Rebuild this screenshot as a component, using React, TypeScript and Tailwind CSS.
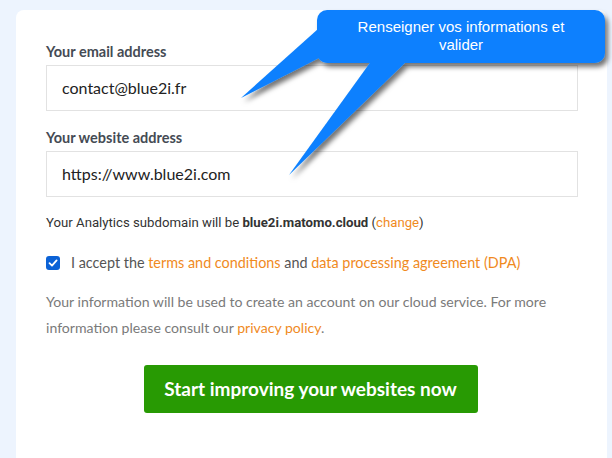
import React from "react";

const sans = "font-['Lato','Open_Sans',sans-serif]";

function Callout() {
  return (
    <div className="pointer-events-none absolute left-0 top-0 h-[458px] w-[612px]">
      <svg width="612" height="458" className="absolute left-0 top-0">
        <defs>
          <filter id="sh" x="-20%" y="-20%" width="140%" height="160%">
            <feDropShadow dx="3" dy="4" stdDeviation="2.5" floodColor="#000" floodOpacity="0.55" />
          </filter>
        </defs>
        <g filter="url(#sh)" fill="#0a80fe">
          <rect x="317" y="10" width="288" height="53" rx="10" />
          <polygon points="318,29 241,98 321,57" />
          <polygon points="372,60 289,175 408,60" />
        </g>
      </svg>
      <div className="absolute left-[317px] top-[18px] w-[288px] text-center font-['Liberation_Sans',Arial,sans-serif] text-[15px] leading-[18px] text-white">
        Renseigner vos informations et
        <br />
        valider
      </div>
    </div>
  );
}

export default function App() {
  return (
    <div className={`relative h-[458px] w-[612px] overflow-hidden bg-[#edf4fe] pt-[10px] ${sans}`}>
      <div className="ml-[16px] h-[460px] w-[591px] rounded-[8px] bg-white pl-[30px] pr-[29px] pt-[32px]">
        <label className="block text-[14.5px] font-bold leading-[20px] text-[#454b54]">
          Your email address
        </label>
        <div className="mt-[3px] flex h-[46px] items-center border border-[#e2e2e2] px-[15px] text-[16px] text-[#222]">
          contact@blue2i.fr
        </div>
        <label className="mt-[17px] block text-[14.5px] font-bold leading-[20px] text-[#454b54]">
          Your website address
        </label>
        <div className="mt-[3px] flex h-[46px] items-center border border-[#e2e2e2] px-[15px] text-[16px] text-[#222]">
          https://www.blue2i.com
        </div>
        <p className="mt-[16px] font-['Roboto',sans-serif] text-[13.2px] leading-[20px] text-[#333]">
          Your Analytics subdomain will be <b className="font-bold">blue2i.matomo.cloud</b> (
          <span className="text-[#f08a1e]">change</span>)
        </p>
        <div className="mt-[20px] flex items-center">
          <span className="flex h-[14px] w-[14px] items-center justify-center rounded-[3px] bg-[#0b62d6]">
            <svg width="10" height="10" viewBox="0 0 10 10">
              <path d="M1.5 5.2 L4 7.6 L8.6 2.4" stroke="#fff" strokeWidth="1.8" fill="none" strokeLinecap="round" strokeLinejoin="round" />
            </svg>
          </span>
          <span className="ml-[11px] text-[14.4px] leading-[20px] text-[#555]">
            I accept the <span className="text-[#f08a1e]">terms and conditions</span> and{" "}
            <span className="text-[#f08a1e]">data processing agreement (DPA)</span>
          </span>
        </div>
        <p className="mt-[16px] text-[14.1px] leading-[26px] text-[#7a7a7a]">
          Your information will be used to create an account on our cloud service. For more information please consult our{" "}
          <span className="text-[#f08a1e]">privacy policy</span>.
        </p>
        <div className="mt-[24px] flex justify-center pr-[3px]">
          <button className="h-[48px] w-[334px] rounded-[3px] bg-[#289a03] text-[19px] font-bold text-white">
            Start improving your websites now
          </button>
        </div>
      </div>
      <Callout />
    </div>
  );
}
